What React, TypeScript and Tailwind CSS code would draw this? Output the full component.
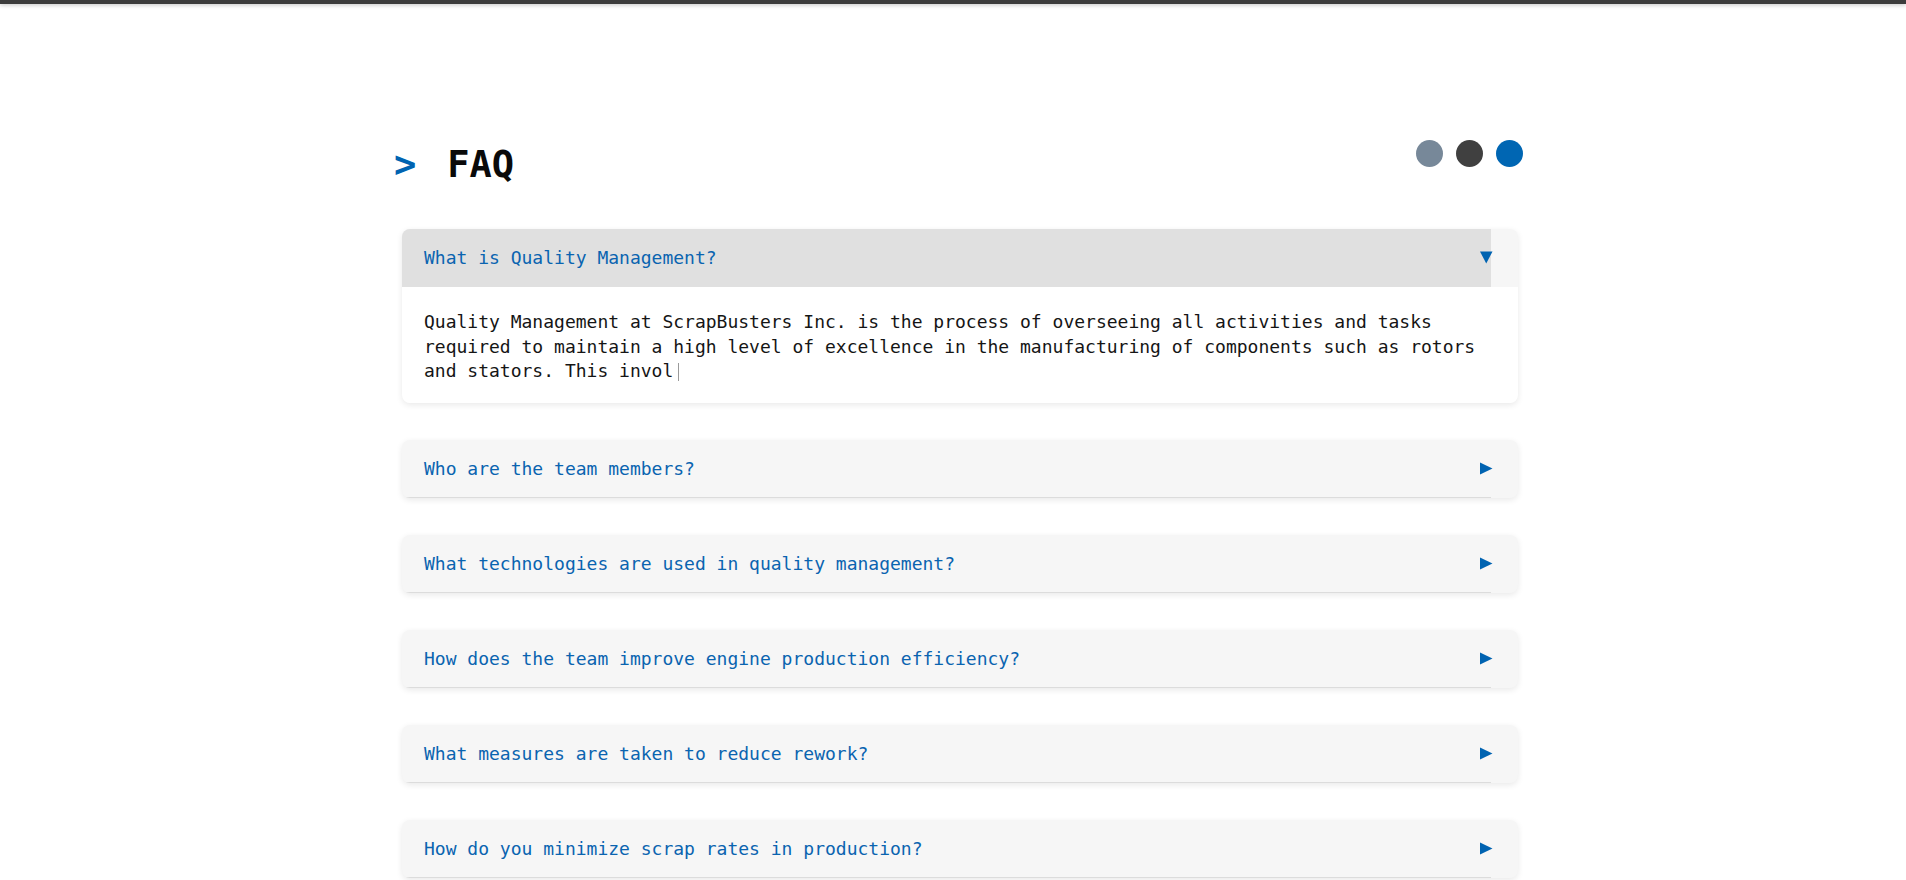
import { useState } from "react";

const faqs = [
  {
    q: "What is Quality Management?",
    a: "Quality Management at ScrapBusters Inc. is the process of overseeing all activities and tasks required to maintain a high level of excellence in the manufacturing of components such as rotors and stators. This invol",
  },
  { q: "Who are the team members?", a: "" },
  { q: "What technologies are used in quality management?", a: "" },
  { q: "How does the team improve engine production efficiency?", a: "" },
  { q: "What measures are taken to reduce rework?", a: "" },
  { q: "How do you minimize scrap rates in production?", a: "" },
];

function FaqItem({
  q,
  a,
  open,
  onToggle,
}: {
  q: string;
  a: string;
  open: boolean;
  onToggle: () => void;
}) {
  return (
    <div className="flex flex-col rounded-lg bg-[#f6f6f6] shadow-[0_2px_6px_rgba(0,0,0,0.09)] overflow-hidden">
      <button
        type="button"
        onClick={onToggle}
        className={`flex h-[58px] mr-[27px] items-center justify-between pl-[22px] text-left border-b ${
          open ? "bg-[#e0e0e0] border-[#e0e0e0]" : "border-[#dcdcdc]"
        }`}
      >
        <span className="text-[18px] text-[#0a64b0]">{q}</span>
        <span className="-mr-[2px] flex w-[13px] justify-center">
          {open ? (
            <svg width="13" height="13" viewBox="0 0 13 13">
              <path d="M0 0.5 H12.5 L6.25 12.5 Z" fill="#0063b1" />
            </svg>
          ) : (
            <svg width="13" height="13" viewBox="0 0 13 13">
              <path d="M0 0.5 V12.5 L12.5 6.5 Z" fill="#0063b1" />
            </svg>
          )}
        </span>
      </button>

      {open && (
        <div className="bg-white pl-[22px] pr-[22px] pt-[23px] pb-[19px] text-[18px] leading-[24.5px] text-[#151515]">
          {a}
          {/* typing caret */}
          <span className="ml-[5px] inline-block h-[18px] w-px bg-[#9a9a9a] align-[-4px]" />
        </div>
      )}
    </div>
  );
}

export default function App() {
  const [openIndex, setOpenIndex] = useState<number | null>(0);

  return (
    <div className="min-h-[880px] bg-white font-['DejaVu_Sans_Mono',monospace]">
      {/* Top bar */}
      <div className="h-[4px] bg-[#3c3c3c] shadow-[0_1px_4px_rgba(0,0,0,0.25)]" />

      <main className="mx-auto w-[1140px] pt-[136px]">
        <div className="flex items-start justify-between">
          <h1 className="mt-[4px] ml-[11px] flex text-[37px] font-bold leading-[42px] text-[#0a0a0a]">
            <span className="mr-[31px] text-[#0063b1]">&gt;</span>
            <span>FAQ</span>
          </h1>
          <div className="flex gap-[13px]">
            <span className="h-[27px] w-[27px] rounded-full bg-[#778899]" />
            <span className="h-[27px] w-[27px] rounded-full bg-[#404040]" />
            <span className="h-[27px] w-[27px] rounded-full bg-[#0066b3]" />
          </div>
        </div>

        <div className="mt-[43px] ml-[19px] mr-[5px] flex flex-col gap-[37px]">
          {faqs.map((f, i) => (
            <FaqItem
              key={f.q}
              q={f.q}
              a={f.a}
              open={openIndex === i}
              onToggle={() => setOpenIndex(openIndex === i ? null : i)}
            />
          ))}
        </div>
      </main>
    </div>
  );
}
